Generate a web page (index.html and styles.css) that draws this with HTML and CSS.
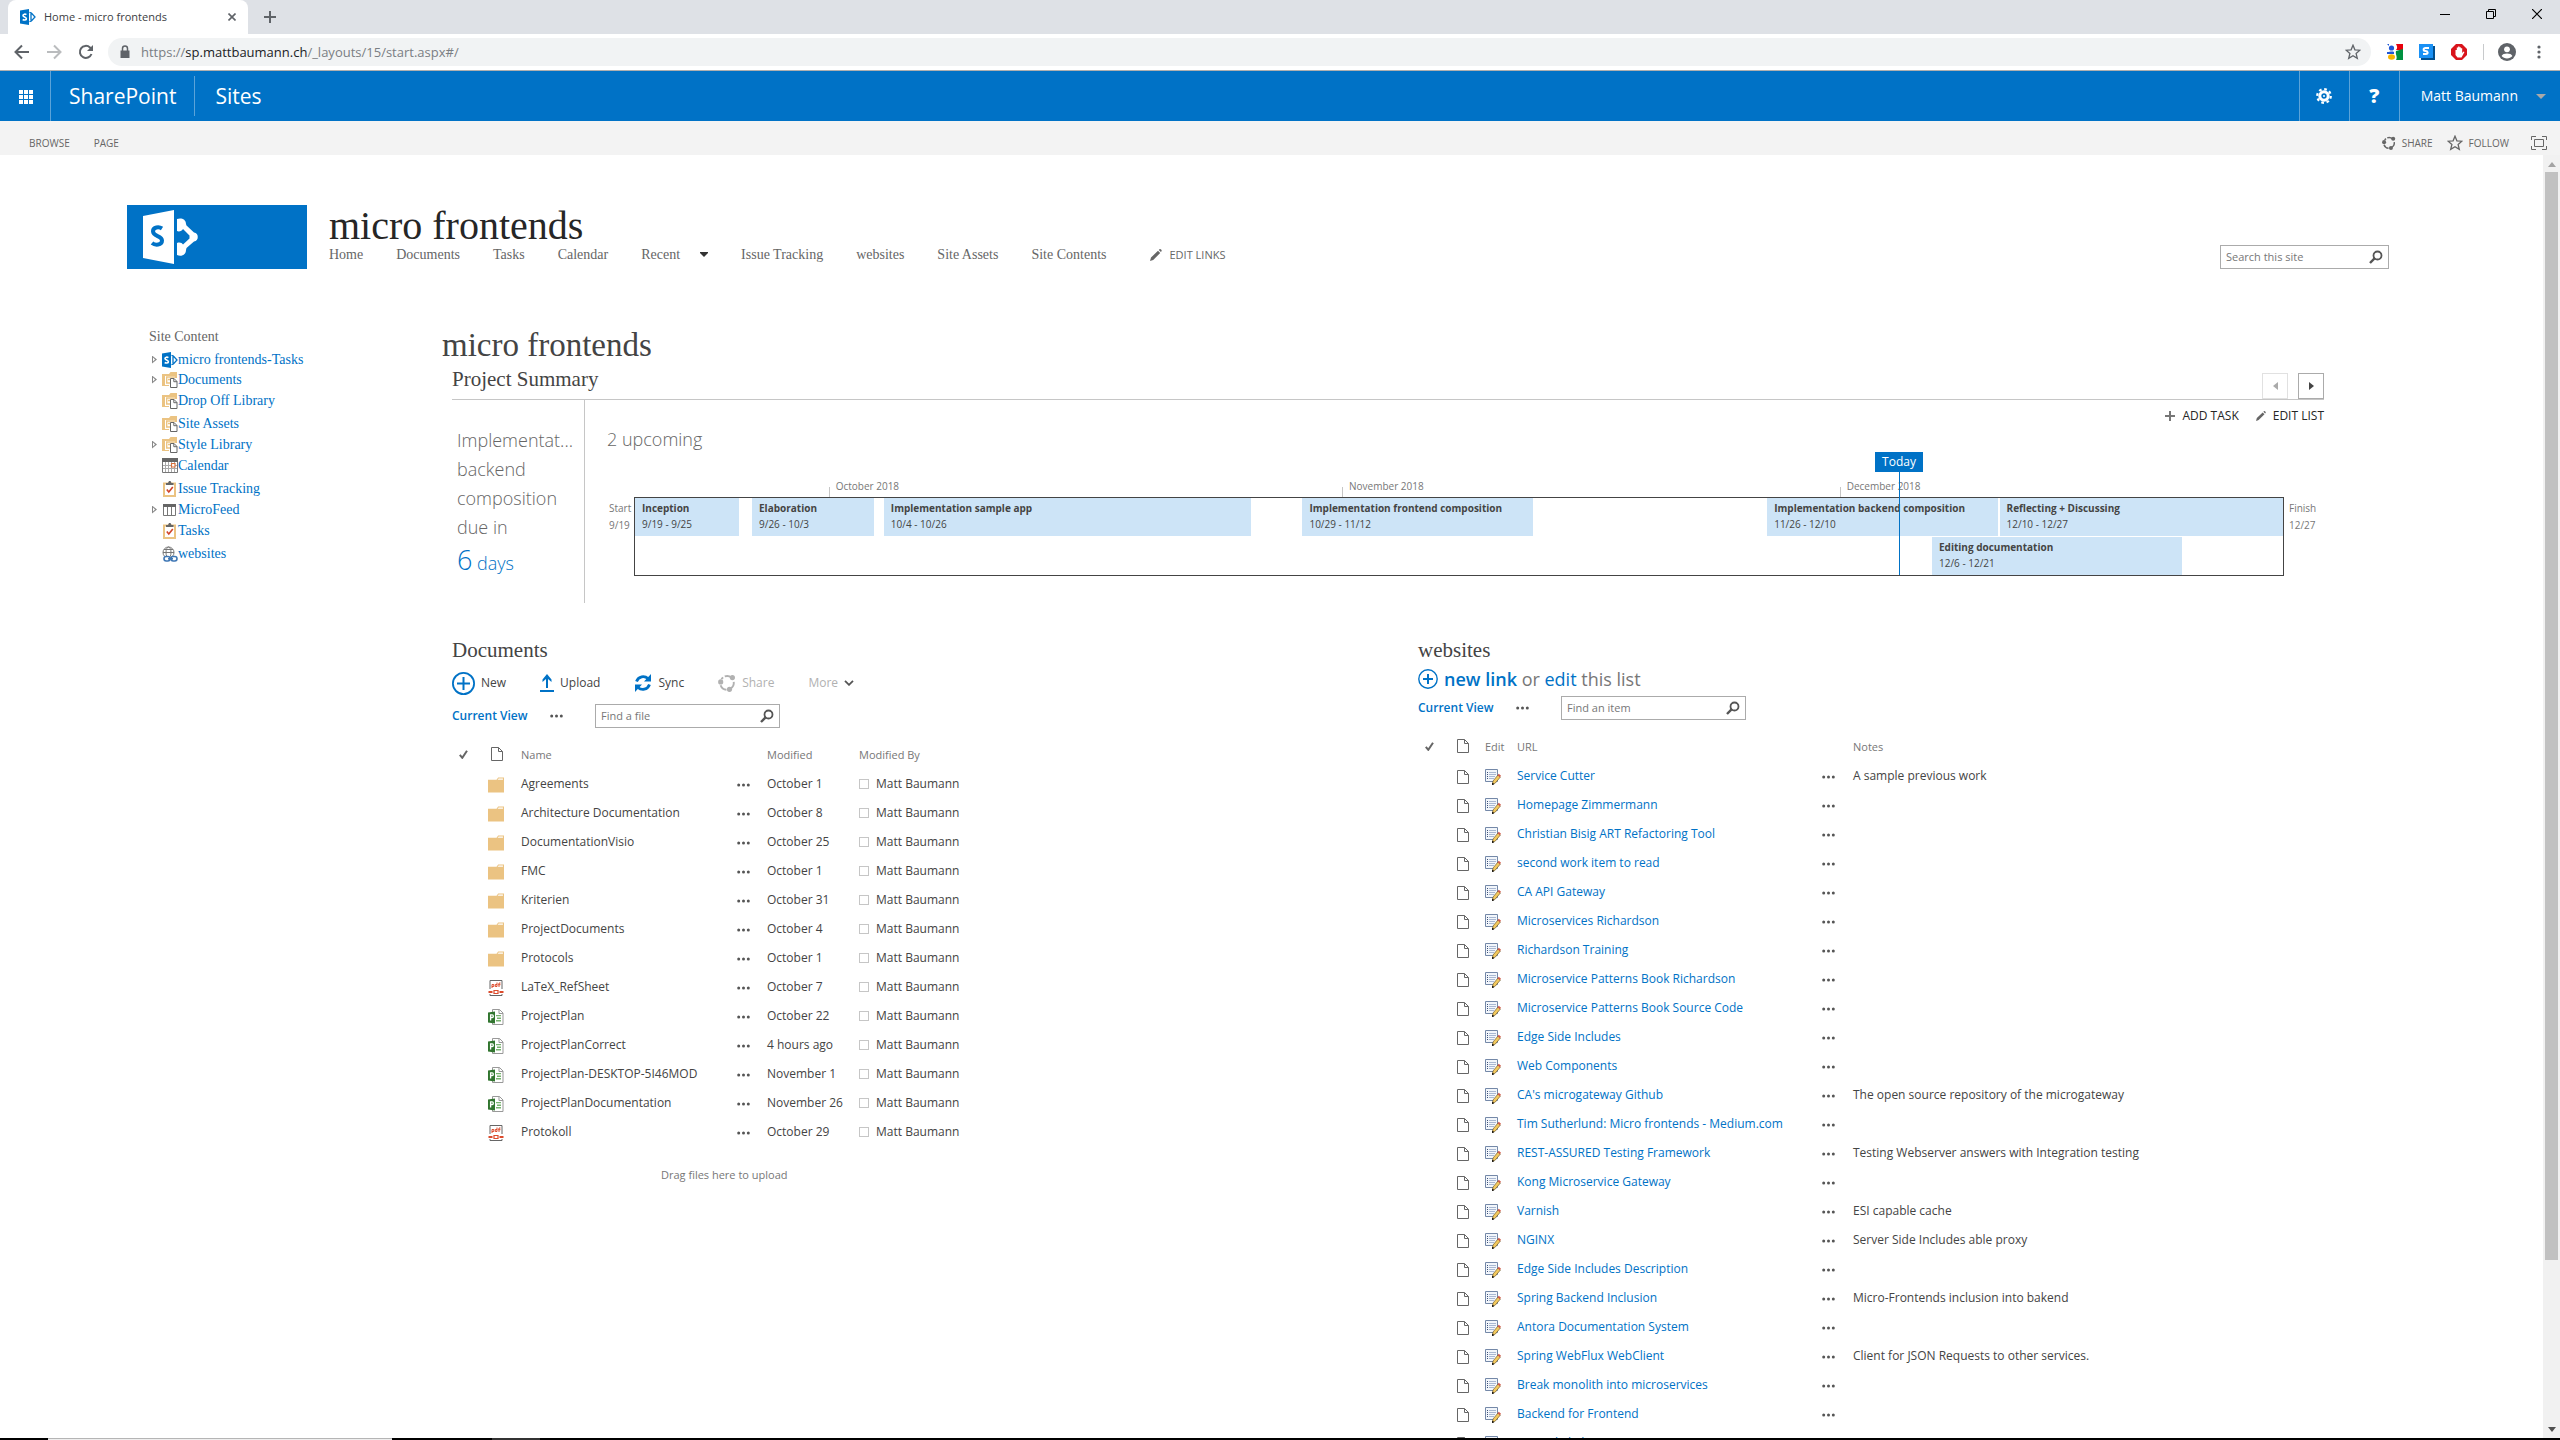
FILE: index.html
```html
<!DOCTYPE html>
<html lang="en">
<head>
<meta charset="utf-8">
<title>Home - micro frontends</title>
<link rel="stylesheet" href="styles.css">
</head>
<body>
<svg class="sprite" aria-hidden="true">
  <symbol id="i-sp" viewBox="0 0 16 16"><path fill="#0072c6" d="M0 1.6 9 0v16L0 14.4z"/><path fill="none" stroke="#0072c6" stroke-width="1.3" d="M9.5 3.4 11.4 4 15 8l-3.6 4-1.9.7M11 4.500v7"/><path fill="none" stroke="#fff" stroke-width="1.6" d="M6.4 5.600C5.400 4.900 3 4.900 3 6.400S6.400 8 6.400 9.700 3.900 11.300 2.700 10.500"/></symbol>
  <symbol id="i-doc" viewBox="0 0 12 14"><path fill="#fff" stroke="#666" d="M.5.5h7l4 4v9H.5z"/><path fill="none" stroke="#666" d="M7.5.5v4h4"/></symbol>
  <symbol id="i-folder" viewBox="0 0 15 14"><path fill="#ebc382" d="M0 2h8l1.500-2H15v14H0z"/><path fill="#fff" d="M9 2l1-1h4v1z"/></symbol>
  <symbol id="i-pdf" viewBox="0 0 15 16"><path fill="none" stroke="#666" d="M1.5 9V.5h12V9M1.5 14v1.500h12V14"/><path fill="#dc4b2c" d="M0 11h4v2H0zM11 11h4v2h-4z"/><path fill="none" stroke="#dc4b2c" stroke-width="1.2" d="M5.5 10.500h4v3h-4z"/><path fill="none" stroke="#dc4b2c" d="M3.5 8V4.500h1.800v2H3.500M8.500 2.500v4H6.800v-2h1.700M10.500 7V3H12M9.700 4.700H12"/></symbol>
  <symbol id="i-proj" viewBox="0 0 16 16"><path fill="#fff" stroke="#999" d="M4.500.5h7l3.500 3.500v11.500H4.500z"/><path fill="none" stroke="#999" d="M11 .5v4h4"/><path fill="#77b36f" d="M8 6h5v1.200H8zM9 8.500h4V10H9zM8 11h5v1.500H8z"/><path fill="#31752f" d="M0 3.500 7 2.500v12L0 13.500z"/><path fill="none" stroke="#fff" stroke-width="1.3" d="M2.600 11.500V5.800h1.600c1.500 0 1.500 2.700 0 2.700H2.600"/></symbol>
  <symbol id="i-edit" viewBox="0 0 16 16"><path fill="#f2f6fb" stroke="#7488a8" d="M.5.5h12v12H.5z"/><path fill="#3d5078" d="M2 3h1v1H2zM2 5h1v1H2zM2 7h1v1H2zM2 9h1v1H2z"/><path fill="none" stroke="#a9b8d2" d="M4 3.500h7M4 5.500h7M4 7.500h6M4 9.500h5"/><path fill="#f3c95e" stroke="#5c4a1c" stroke-width=".6" d="M7.500 15.500 8 12l5-6 2.400 2-5 6z"/><path fill="#cf5a4a" d="m12.500 6.300 1.300-1.600 2.200 2-1.200 1.600z"/><path d="M7 16l.3-2.400 2 1.600z"/></symbol>
  <symbol id="i-lib" viewBox="0 0 16 16"><path fill="#ebc382" d="M0 2h7l1.500-2H15v6h-2V4H3v9h4v1H0z"/><path fill="none" stroke="#ebc382" stroke-width="1.4" d="M4 5h9M4.700 5v6H8M6 7.500h4"/><path fill="#fff" stroke="#666" d="M8.500 6.500H12l3 3v6H8.500z"/><path fill="none" stroke="#666" d="M11.800 6.500v3.200H15"/></symbol>
  <symbol id="i-cal" viewBox="0 0 16 16"><path fill="#fff" stroke="#777" d="M.5.5h15v14H.5z"/><path fill="#666" d="M0 0h16v4H0z"/><path fill="none" stroke="#aaa" d="M3.500 4v10M6.500 4v10M12.500 4v10M1 7.500h14M1 10.500h14M9.500 4v10"/><path fill="#fff" stroke="#d9713c" stroke-width="1.200" d="M9.500 5.500H13V9H9.500z"/></symbol>
  <symbol id="i-task" viewBox="0 0 16 16"><path fill="#fff" stroke="#ebc382" stroke-width="2" d="M2 2.500h11V15H2z"/><path fill="#666" d="M4 4V2h2l1-2h1.500l1 2h2v2z"/><path fill="none" stroke="#d0452b" stroke-width="1.6" d="m4.800 8.500 2 2.500 4-5"/></symbol>
  <symbol id="i-list" viewBox="0 0 16 16"><path fill="#fff" stroke="#777" d="M1.500 3.500h12v10h-12zM5.500 4v9M9.500 4v9"/><path fill="#666" d="M1 2h13v3H1z"/></symbol>
  <symbol id="i-web" viewBox="0 0 16 16"><g fill="none" stroke="#777"><circle cx="6.500" cy="6.500" r="5.500"/><ellipse cx="6.500" cy="6.500" rx="2.500" ry="5.500"/><path d="M1 6.500h11M2 3.500h9"/></g><g fill="#fff" stroke="#3f77b5" stroke-width="1.6"><rect x="2" y="10.500" width="6" height="4.500" rx="2.200"/><rect x="9" y="10.500" width="6" height="4.500" rx="2.200"/><path d="M6 12.800h5"/></g></symbol>
  <symbol id="i-search" viewBox="0 0 14 14"><circle cx="8.500" cy="5.500" r="4" fill="none" stroke="#555" stroke-width="1.8"/><path stroke="#555" stroke-width="2.400" d="M5.800 8.200 1 13"/></symbol>
  <symbol id="i-check" viewBox="0 0 9 9"><path fill="none" stroke="#666" stroke-width="2" d="m.8 4.800 2.500 3L8 .8"/></symbol>
  <symbol id="i-dots" viewBox="0 0 13 4"><g fill="#555"><circle cx="1.700" cy="2" r="1.500"/><circle cx="6.500" cy="2" r="1.500"/><circle cx="11.300" cy="2" r="1.500"/></g></symbol>
  <symbol id="i-pencil" viewBox="0 0 12 12"><path fill="#666" d="M0 12l1-3.500L8 1.800l2.200 2.200-7 6.900zM8.800 1l1-.9c.8-.3 2.200 1.100 1.900 1.900l-.8 1z"/></symbol>
  <symbol id="i-share" viewBox="0 0 16 16"><g fill="none" stroke="currentColor" stroke-width="1.7"><path d="M6 2.200A6 6 0 0 1 12 3.300M14 7a6 6 0 0 1-3 6M7.500 14A6 6 0 0 1 2.300 10M3 4.500l1.500-1.500"/></g><g fill="currentColor"><circle cx="2.400" cy="7" r="2.300"/><circle cx="12.800" cy="3.200" r="2.300"/><circle cx="10.200" cy="13.600" r="2.300"/></g></symbol>
  <symbol id="i-star" viewBox="0 0 16 16"><path fill="none" stroke="currentColor" stroke-width="1.3" d="m8 1.200 1.900 4.600 5 .4-3.800 3.200 1.200 4.900L8 11.700l-4.300 2.600 1.200-4.900L1.100 6.200l5-.4z"/></symbol>
</svg>

<header class="browser">
  <div class="tabstrip">
    <div class="tab">
      <svg class="ic16"><use href="#i-sp"/></svg>
      <span class="tab-title">Home - micro frontends</span>
      <button class="bare" aria-label="Close tab"><svg class="ic8" viewBox="0 0 8 8"><path stroke="#5f6368" stroke-width="1.6" d="m.5.5 7 7M7.500.5l-7 7"/></svg></button>
    </div>
    <button class="bare newtab" aria-label="New tab"><svg class="ic12" viewBox="0 0 12 12"><path stroke="#5f6368" stroke-width="2" d="M6 0v12M0 6h12"/></svg></button>
    <div class="window-buttons">
      <button class="bare" aria-label="Minimize"><svg class="ic10" viewBox="0 0 10 10"><path stroke="#000" d="M0 5.500h10"/></svg></button>
      <button class="bare" aria-label="Restore"><svg class="ic10" viewBox="0 0 10 10"><path fill="none" stroke="#000" d="M.5 2.500h7v7h-7zM2.500 2.500v-2h7v7h-2"/></svg></button>
      <button class="bare" aria-label="Close"><svg class="ic10" viewBox="0 0 10 10"><path stroke="#000" stroke-width="1.2" d="m0 0 10 10M10 0 0 10"/></svg></button>
    </div>
  </div>
  <div class="navbar">
    <button class="bare" aria-label="Back"><svg class="ic16" viewBox="0 0 16 16"><path fill="none" stroke="#5f6368" stroke-width="2" d="M15 8H2M8 1.500 1.500 8 8 14.500"/></svg></button>
    <button class="bare" aria-label="Forward"><svg class="ic16" viewBox="0 0 16 16"><path fill="none" stroke="#babcbe" stroke-width="2" d="M1 8h13M8 1.500 14.500 8 8 14.500"/></svg></button>
    <button class="bare" aria-label="Reload"><svg class="ic16" viewBox="0 0 16 16"><path fill="none" stroke="#5f6368" stroke-width="2" d="M13.500 10A6 6 0 1 1 12 3.500l1 1"/><path fill="#5f6368" d="M15 1v6H9z"/></svg></button>
    <div class="omnibox">
      <svg class="ic14" viewBox="0 0 14 14"><path fill="#5f6368" d="M2.500 5.500h9V13h-9z"/><path fill="none" stroke="#5f6368" stroke-width="1.500" d="M4.500 6V3.500a2.500 2.500 0 0 1 5 0V6"/></svg>
      <span class="url">https://<b>sp.mattbaumann.ch</b>/_layouts/15/start.aspx#/</span>
      <button class="bare fav" aria-label="Bookmark"><svg class="ic16"><use href="#i-star"/></svg></button>
    </div>
    <div class="extensions">
      <svg class="ic16" viewBox="0 0 16 16"><path fill="#fff" d="M0 0h16v16H0z"/><path fill="#e8000d" d="M9 0h7v6H9c2-2 1-4 0-6z"/><path fill="#009140" d="M9 7l7-2v11H9c2-3-1-6 0-9z"/><circle cx="4.500" cy="4" r="2.600" fill="#1f58d6"/><path fill="#1f58d6" d="M0 8c3 0 5-1 7 0v2H0zM0 0h2v2z"/><ellipse cx="4.500" cy="13" rx="3.500" ry="2.700" fill="#f7b500"/></svg>
      <svg class="ic16" viewBox="0 0 16 16"><path fill="#004f8f" d="M2 2h14v14H2z"/><path fill="#1a91f5" d="M0 0h14v14H0z"/><path fill="none" stroke="#fff" stroke-width="2" d="M10 4H6.500C4 4 4 7 6.500 7S9.500 10 7 10H4"/></svg>
      <svg class="ic16" viewBox="0 0 16 16"><path fill="#d9141c" d="M5 0h6l5 5v6l-5 5H5l-5-5V5z"/><path fill="#fff" d="M4.500 6h1.300V3.500h1.300V2.500h1.400v.8h1.300v1h1.400V9l1.300-1.500 1 .5-3 5.500H6.500L4.500 11z"/></svg>
      <span class="ext-sep"></span>
      <svg class="ic18" viewBox="0 0 18 18"><circle cx="9" cy="9" r="9" fill="#5f6368"/><circle cx="9" cy="6.300" r="2.900" fill="#fff"/><path fill="#fff" d="M3.600 13c1-3.300 9.800-3.300 10.800 0-2.500 3.300-8.300 3.300-10.800 0z"/></svg>
      <button class="bare" aria-label="Menu"><svg class="ic14" viewBox="0 0 14 14"><g fill="#5f6368"><circle cx="7" cy="2" r="1.600"/><circle cx="7" cy="7" r="1.600"/><circle cx="7" cy="12" r="1.600"/></g></svg></button>
    </div>
  </div>
</header>

<nav class="suite" aria-label="Suite">
  <button class="bare launcher" aria-label="Apps"><svg class="ic16" viewBox="0 0 16 16"><path fill="#fff" d="M2 2h4v4H2zM7 2h4v4H7zM12 2h4v4h-4zM2 7h4v4H2zM7 7h4v4H7zM12 7h4v4h-4zM2 12h4v4H2zM7 12h4v4H7zM12 12h4v4h-4z"/></svg></button>
  <a class="suite-brand" href="#">SharePoint</a>
  <a class="suite-link" href="#">Sites</a>
  <button class="bare suite-btn push" aria-label="Settings"><svg class="ic16" viewBox="0 0 16 16"><circle cx="8" cy="8" r="4.200" fill="none" stroke="#fff" stroke-width="3"/><circle cx="8" cy="8" r="6.800" fill="none" stroke="#fff" stroke-width="2.200" stroke-dasharray="2.670 2.670"/><circle cx="8" cy="8" r="1" fill="#fff"/></svg></button>
  <button class="bare suite-btn help" aria-label="Help">?</button>
  <button class="bare user">Matt Baumann <svg class="caret" viewBox="0 0 10 5"><path fill="#a9a9a9" d="M0 0h10L5 5z"/></svg></button>
</nav>

<div class="ribbon">
  <a href="#">BROWSE</a>
  <a href="#">PAGE</a>
  <a class="push act" href="#"><svg class="ic14"><use href="#i-share"/></svg>SHARE</a>
  <a class="act" href="#"><svg class="ic16"><use href="#i-star"/></svg>FOLLOW</a>
  <button class="bare focus" aria-label="Focus on content"><svg class="ic16" viewBox="0 0 16 14"><path fill="none" stroke="#666" d="M.5 4V.5H5M11 .5h4.500V4M15.500 10v3.500H11M5 13.500H.5V10M3.500 3.500h9v7h-9z"/></svg></button>
</div>

<div class="workspace">
  <div class="page">
    <header class="site-head">
      <a class="logo" href="#" aria-label="SharePoint"><svg viewBox="0 0 180 64"><path fill="#fff" d="M16 11 47 5v54L16 53z"/><path fill="none" stroke="#0072c6" stroke-width="4" d="M35 23.500c-3-2-9-1.500-9 2.800 0 5.500 9 4 9 9.200 0 5-7 5-10 2.500"/><path fill="#fff" d="M50 14c4-1.500 9 0 9 5l.5 1.500L67 27.500c5 0 5 9 0 9L59.500 43l-.5 2c0 5-5 7-9 5V38c3-1 5 0 6 1.500l6.500-6v-3L56 24c-1 2-4 3-6 2z"/></svg></a>
      <div class="site-title">
        <h1>micro frontends</h1>
        <nav class="topnav" aria-label="Site">
          <a href="#">Home</a><a href="#">Documents</a><a href="#">Tasks</a><a href="#">Calendar</a><a href="#" class="recent">Recent <svg class="ic-down" viewBox="0 0 8 5"><path fill="#333" d="M0 0h8v1L4 5 0 1z"/></svg></a><a href="#">Issue Tracking</a><a href="#">websites</a><a href="#">Site Assets</a><a href="#">Site Contents</a><a class="edit-links" href="#"><svg class="ic12"><use href="#i-pencil"/></svg>EDIT LINKS</a>
        </nav>
      </div>
      <label class="search site-search"><input type="text" placeholder="Search this site" aria-label="Search this site"><svg class="ic14"><use href="#i-search"/></svg></label>
    </header>

    <div class="columns">
      <aside class="tree">
        <p>Site Content</p>
        <ul>
          <li class="root"><i class="exp"></i><svg class="ic16"><use href="#i-sp"/></svg><a href="#">micro frontends-Tasks</a></li>
          <li><i class="exp"></i><svg class="ic16"><use href="#i-lib"/></svg><a href="#">Documents</a></li>
          <li><i></i><svg class="ic16"><use href="#i-lib"/></svg><a href="#">Drop Off Library</a></li>
          <li class="spaced"><i></i><svg class="ic16"><use href="#i-lib"/></svg><a href="#">Site Assets</a></li>
          <li><i class="exp"></i><svg class="ic16"><use href="#i-lib"/></svg><a href="#">Style Library</a></li>
          <li><i></i><svg class="ic16"><use href="#i-cal"/></svg><a href="#">Calendar</a></li>
          <li class="spaced"><i></i><svg class="ic16"><use href="#i-task"/></svg><a href="#">Issue Tracking</a></li>
          <li><i class="exp"></i><svg class="ic16"><use href="#i-list"/></svg><a href="#">MicroFeed</a></li>
          <li><i></i><svg class="ic16"><use href="#i-task"/></svg><a href="#">Tasks</a></li>
          <li class="spaced"><i></i><svg class="ic16"><use href="#i-web"/></svg><a href="#">websites</a></li>
        </ul>
      </aside>

      <main>
        <h2>micro frontends</h2>
        <section class="summary">
          <div class="summary-head">
            <h3>Project Summary</h3>
            <button class="pager off" aria-label="Previous"><svg class="ic-tri" viewBox="0 0 5 8"><path fill="#aaa" d="M5 0v8L0 4z"/></svg></button>
            <button class="pager" aria-label="Next"><svg class="ic-tri" viewBox="0 0 5 8"><path fill="#444" d="M0 0v8l5-4z"/></svg></button>
          </div>
          <div class="summary-body">
            <div class="due">Implementat...<br>backend<br>composition<br>due in<div class="days"><span>6</span> days</div></div>
            <div class="plan">
              <div class="plan-tools">
                <a href="#"><svg class="ic10" viewBox="0 0 10 10"><path stroke="#777" stroke-width="2" d="M5 0v10M0 5h10"/></svg>ADD TASK</a>
                <a href="#"><svg class="ic10" viewBox="0 0 12 12"><use href="#i-pencil"/></svg>EDIT LIST</a>
              </div>
              <div class="upcoming">2 upcoming</div>
              <div class="timeline">
                <div class="edge">Start<br>9/19</div>
                <div class="track">
                  <span class="month" style="left:11.75%">October 2018</span>
                  <span class="month" style="left:42.9%">November 2018</span>
                  <span class="month" style="left:73.1%">December 2018</span>
                  <div class="bar" style="left:0%;width:6.3%"><b>Inception</b>9/19 - 9/25</div>
                  <div class="bar" style="left:7.1%;width:7.4%"><b>Elaboration</b>9/26 - 10/3</div>
                  <div class="bar" style="left:15.1%;width:22.3%"><b>Implementation sample app</b>10/4 - 10/26</div>
                  <div class="bar" style="left:40.5%;width:14%"><b>Implementation frontend composition</b>10/29 - 11/12</div>
                  <div class="bar" style="left:68.7%;width:14%"><b>Implementation backend composition</b>11/26 - 12/10</div>
                  <div class="bar" style="left:82.8%;width:17.2%"><b>Reflecting + Discussing</b>12/10 - 12/27</div>
                  <div class="bar second" style="left:78.7%;width:15.2%"><b>Editing documentation</b>12/6 - 12/21</div>
                  <div class="today" style="left:76.7%"><span>Today</span></div>
                </div>
                <div class="edge">Finish<br>12/27</div>
              </div>
            </div>
          </div>
        </section>

        <div class="lists">
          <section class="docs">
            <h3>Documents</h3>
            <div class="doc-tools">
              <button class="bare"><svg class="ic23" viewBox="0 0 23 23"><circle cx="11.500" cy="11.500" r="10.600" fill="none" stroke="#0072c6" stroke-width="1.8"/><path stroke="#0072c6" stroke-width="2" d="M11.500 5v13M5 11.500h13"/></svg>New</button>
              <button class="bare"><svg class="ic-up" viewBox="0 0 14 18"><path fill="#0072c6" d="M0 16h14v2H0zM6 14V5L2.500 8V5.500L7 0l4.500 5.500V8L8 5v9z"/></svg>Upload</button>
              <button class="bare"><svg class="ic18" viewBox="0 0 17 18"><path fill="none" stroke="#0072c6" stroke-width="2.800" d="M2 7.500C4 2 10 1.500 13.500 4.500M15 10.500C13 16 7 16.500 3.500 13.500"/><path fill="#0072c6" d="M16.500 0v7.500H9.500zM.5 18v-7.500h7z"/></svg>Sync</button>
              <button class="bare muted" disabled><svg class="ic18"><use href="#i-share"/></svg>Share</button>
              <button class="bare muted">More <svg class="ic-chev" viewBox="0 0 10 6"><path fill="none" stroke="#555" stroke-width="1.8" d="m1 .8 4 4 4-4"/></svg></button>
            </div>
            <div class="view-row">
              <a href="#">Current View</a>
              <button class="bare" aria-label="More views"><svg class="ic-dots"><use href="#i-dots"/></svg></button>
              <label class="search"><input type="text" placeholder="Find a file" aria-label="Find a file"><svg class="ic14"><use href="#i-search"/></svg></label>
            </div>
            <table>
              <colgroup><col class="d1"><col class="d2"><col class="d3"><col class="d4"><col class="d5"><col class="d6"></colgroup>
              <thead><tr><th class="ck"><svg class="ic9"><use href="#i-check"/></svg></th><th class="kind"><svg class="ic-doc"><use href="#i-doc"/></svg></th><th>Name</th><th></th><th>Modified</th><th>Modified By</th></tr></thead>
              <tbody id="docs"></tbody>
            </table>
            <p class="drop">Drag files here to upload</p>
          </section>

          <section class="sites">
            <h3>websites</h3>
            <div class="newlink"><svg class="ic20" viewBox="0 0 20 20"><circle cx="10" cy="10" r="9.200" fill="none" stroke="#0072c6" stroke-width="1.400"/><path stroke="#0072c6" stroke-width="2" d="M10 5v10M5 10h10"/></svg><span><a class="strong" href="#">new link</a> or <a href="#">edit</a> this list</span></div>
            <div class="view-row">
              <a href="#">Current View</a>
              <button class="bare" aria-label="More views"><svg class="ic-dots"><use href="#i-dots"/></svg></button>
              <label class="search"><input type="text" placeholder="Find an item" aria-label="Find an item"><svg class="ic14"><use href="#i-search"/></svg></label>
            </div>
            <table>
              <colgroup><col class="w1"><col class="w2"><col class="w3"><col class="w4"><col class="w5"><col></colgroup>
              <thead><tr><th class="ck"><svg class="ic9"><use href="#i-check"/></svg></th><th><svg class="ic-doc"><use href="#i-doc"/></svg></th><th>Edit</th><th>URL</th><th></th><th>Notes</th></tr></thead>
              <tbody id="sites"></tbody>
            </table>
          </section>
        </div>
      </main>
    </div>
  </div>
  <div class="scrollbar" aria-hidden="true">
    <svg class="ic-sb" viewBox="0 0 8 5"><path fill="#a3a3a3" d="M0 5h8L4 0z"/></svg>
    <div class="rail"><div class="thumb"></div></div>
    <svg class="ic-sb" viewBox="0 0 8 5"><path fill="#505050" d="M0 0h8L4 5z"/></svg>
  </div>
</div>
<div class="taskbar" aria-hidden="true"><span class="active"></span><span class="idle"></span></div>
<script src="app.js"></script>
</body>
</html>
```
FILE: styles.css
```css
* { box-sizing: border-box; }
html, body { height: 100%; margin: 0; }
body {
  display: flex;
  flex-direction: column;
  overflow: hidden;
  background: #fff;
  color: #444;
  font: 12px/18px "Open Sans", "Noto Sans", sans-serif;
}
h1, h2, h3, p, ul { margin: 0; padding: 0; font-weight: 400; }
a { color: #0072c6; text-decoration: none; }
svg { display: block; flex: none; }
.sprite { position: absolute; width: 0; height: 0; }
.bare { display: flex; align-items: center; padding: 0; border: 0; background: none; color: inherit; font: inherit; }
.push { margin-left: auto; }

.ic8 { width: 8px; height: 8px; }
.ic9 { width: 9px; height: 9px; }
.ic10 { width: 10px; height: 10px; }
.ic12 { width: 12px; height: 12px; }
.ic14 { width: 14px; height: 14px; }
.ic16 { width: 16px; height: 16px; }
.ic18 { width: 18px; height: 18px; }
.ic20 { width: 20px; height: 20px; }
.ic23 { width: 23px; height: 23px; }
.ic-up { width: 14px; height: 18px; }
.ic-doc { width: 12px; height: 14px; }
.ic-dots { width: 13px; height: 4px; }
.ic-chev { width: 10px; height: 6px; }
.ic-tri { width: 5px; height: 8px; }
.ic-down { width: 8px; height: 5px; }
.ic-sb { width: 8px; height: 5px; }

/* browser window */
.browser { flex: none; border-bottom: 1px solid #b0b0b0; }
.tabstrip { display: flex; align-items: center; height: 34px; padding-left: 8px; background: #dee1e6; }
.tab { display: flex; align-items: center; gap: 8px; width: 240px; height: 34px; padding: 0 12px; border-radius: 8px 8px 0 0; background: #fff; color: #3c4043; font-size: 11px; }
.tab-title { flex: 1; }
.newtab { margin-left: 16px; }
.window-buttons { display: flex; gap: 36px; margin-left: auto; padding: 0 18px 6px 0; }
.navbar { display: flex; align-items: center; gap: 16px; height: 36px; padding: 0 14px; }
.omnibox { display: flex; align-items: center; flex: 1; gap: 9px; height: 28px; margin-left: -2px; padding: 0 10px; border-radius: 14px; background: #f1f3f4; }
.url { flex: 1; color: #7a7e83; font-size: 13px; }
.url b { color: #202124; font-weight: 400; }
.fav { color: #5f6368; }
.extensions { display: flex; align-items: center; gap: 16px; }
.ext-sep { width: 1px; height: 16px; margin-right: -2px; background: #c8cacc; }

/* suite bar */
.suite { display: flex; align-items: center; flex: none; height: 50px; background: #0072c6; color: #fff; }
.suite a { color: #fff; font-size: 21px; line-height: 40px; }
.launcher { justify-content: center; width: 51px; height: 50px; border-right: 1px solid #5ba3d9; }
.suite-brand { padding: 0 18px; border-right: 1px solid #5ba3d9; }
.suite-link { padding: 0 20px; }
.suite-btn { justify-content: center; width: 50px; height: 50px; border-left: 1px solid #5ba3d9; }
.help { font-size: 20px; font-weight: 800; }
.user { gap: 18px; height: 50px; padding: 0 14px 0 21px; border-left: 1px solid #5ba3d9; font-size: 14px; }
.caret { width: 10px; height: 5px; }

.ribbon { display: flex; align-items: center; flex: none; gap: 24px; height: 34px; padding: 9px 13px 0 29px; background: #f3f3f3; }
.ribbon a { color: #666; font-size: 10px; }
.act { display: flex; align-items: center; gap: 6px; margin-right: -10px; }
.act.push { margin-left: auto; }
.focus { margin-left: 8px; }

/* page */
.workspace { display: flex; flex: 1; min-height: 0; }
.page { flex: 1; min-width: 0; overflow: hidden; padding: 50px 154px 0 127px; }
.scrollbar { display: flex; flex-direction: column; align-items: center; flex: none; width: 17px; padding: 7px 0 6px; background: #f1f1f1; }
.rail { flex: 1; width: 13px; margin: 5px 0; }
.thumb { height: 87%; background: #c1c1c1; }
.site-head { display: flex; align-items: flex-start; gap: 22px; }
.logo { width: 180px; height: 64px; background: #0072c6; }
.site-title { flex: 1; font-family: "Liberation Serif", serif; }
h1 { padding-top: 1px; color: #262626; font-size: 40px; line-height: 40px; }
.topnav { display: flex; gap: 33px; font-size: 14px; line-height: 17px; }
.topnav a { color: #666; }
.recent { display: flex; align-items: center; gap: 20px; }
.topnav .edit-links { display: flex; align-items: center; gap: 8px; margin-left: 10px; font-family: "Open Sans", sans-serif; font-size: 11px; }
.search { display: flex; align-items: center; width: 185px; height: 24px; padding: 0 5px; border: 1px solid #ababab; background: #fff; }
.search input { flex: 1; min-width: 0; padding: 0; border: 0; outline: 0; background: none; color: #444; font: 11px/18px "Open Sans", sans-serif; }
.search input::placeholder { color: #777; opacity: 1; }
.site-search { width: 169px; align-self: flex-end; }

.columns { display: flex; padding-top: 56px; }
.tree { flex: none; width: 315px; padding: 2px 0 0 22px; font: 14px/20px "Liberation Serif", serif; }
.tree p { color: #666; }
.tree ul { padding-top: 3px; list-style: none; }
.tree li { display: flex; align-items: center; height: 21px; }
.tree .root { height: 19px; }
.tree .spaced { margin-top: 2px; }
.tree i { width: 13px; }
.tree .exp::before { content: ""; display: block; width: 5px; height: 8px; margin-left: 3px; background: #888; clip-path: polygon(0 0, 100% 50%, 0 100%, 0 0, 1px 2px, 1px 6px, 3px 4px, 1px 2px); }
main { flex: 1; min-width: 0; padding-right: 65px; }
h2 { color: #444; font: 33px/40px "Liberation Serif", serif; }
h3 { color: #444; font: 21px/28px "Liberation Serif", serif; }

.summary, .lists { margin-left: 10px; }
.summary-head { display: flex; gap: 10px; height: 35px; border-bottom: 1px solid #c6c6c6; }
.summary-head h3 { flex: 1; }
.pager { display: flex; align-items: center; justify-content: center; align-self: flex-end; width: 26px; height: 26px; padding: 0; border: 1px solid #ababab; background: #fff; }
.pager.off { border-color: #e1e1e1; }
.summary-body { display: flex; height: 203px; }
.due { width: 133px; padding: 26px 0 0 5px; border-right: 1px solid #c6c6c6; color: #666; font-size: 18px; font-weight: 300; line-height: 29px; white-space: nowrap; }
.days { color: #0072c6; line-height: 35px; }
.days span { font-size: 27px; }
.plan { flex: 1; padding-left: 22px; }
.plan-tools { display: flex; justify-content: flex-end; gap: 17px; padding-top: 7px; }
.plan-tools a { display: flex; align-items: center; gap: 7px; color: #262626; }
.upcoming { color: #666; font-size: 18px; font-weight: 300; line-height: 29px; }
.timeline { display: flex; padding-top: 43px; font-size: 10px; line-height: 17px; white-space: nowrap; }
.edge { width: 27px; padding: 3px 0 0 2px; color: #777; }
.edge:last-child { width: 40px; padding-left: 5px; }
.track { position: relative; flex: 1; height: 79px; border: 1px solid #444; }
.bar { position: absolute; top: 0; height: 38px; padding: 2px 0 0 7px; background: #cde4f7; color: #444; line-height: 16px; }
.bar.second { top: 39px; }
.bar b { display: block; }
.month { position: absolute; top: -20px; height: 19px; padding-left: 7px; color: #777; }
.month::before { content: ""; position: absolute; left: 0; bottom: 0; height: 10px; border-left: 1px solid #c6c6c6; }
.today { position: absolute; top: -46px; bottom: 0; width: 1px; background: #0072c6; }
.today span { position: absolute; left: -24px; width: 48px; height: 20px; background: #0072c6; color: #fff; font-size: 12px; line-height: 20px; text-align: center; }

/* lists */
.lists { display: grid; grid-template-columns: 1fr 1fr; gap: 60px; padding-top: 33px; }
.doc-tools { display: flex; align-items: center; gap: 34px; height: 36px; padding-top: 2px; }
.doc-tools .bare { gap: 6px; }
.doc-tools .muted { color: #b1b1b1; }
.view-row { display: flex; align-items: center; padding-top: 4px; }
.view-row a { width: 98px; font-weight: 600; }
.view-row .search { margin-left: 32px; }
.newlink { display: flex; align-items: center; gap: 6px; height: 28px; padding-top: 2px; color: #777; font-size: 18px; line-height: 26px; }
.newlink .strong { font-weight: 600; }

table { width: 100%; margin-top: 13px; border-collapse: collapse; table-layout: fixed; }
th, td { height: 29px; padding: 0; text-align: left; white-space: nowrap; }
th { height: 28px; color: #777; font-size: 11px; font-weight: 400; }
th svg { margin-bottom: 2px; }
td svg { margin-top: 2px; }
th.ck { padding-left: 7px; }
th.kind { padding-left: 3px; }
.docs table { width: 537px; }
.d1 { width: 36px; }
.d2 { width: 33px; }
.d3 { width: 216px; }
.d4 { width: 30px; }
.d5 { width: 92px; }
.d6 { width: 130px; }
.w1 { width: 39px; }
.w2 { width: 28px; }
.w3 { width: 32px; }
.w4 { width: 305px; }
.w5 { width: 31px; }
td a.file { color: #444; }
.presence { display: inline-block; width: 10px; height: 10px; margin-right: 7px; border: 1px solid #c6c6c6; vertical-align: -1px; }
.drop { width: 537px; padding: 20px 0 0 209px; color: #777; font-size: 11px; }

.taskbar { display: flex; flex: none; height: 2px; padding-left: 48px; background: #000; }
.taskbar .active { width: 344px; border-top: 1px solid #b5b5b5; background: #eee; }
.taskbar .idle { width: 48px; margin-left: 100px; background: #333; }
```
FILE: app.js
```js
const documents = [
  ["folder", "Agreements", "October 1"],
  ["folder", "Architecture Documentation", "October 8"],
  ["folder", "DocumentationVisio", "October 25"],
  ["folder", "FMC", "October 1"],
  ["folder", "Kriterien", "October 31"],
  ["folder", "ProjectDocuments", "October 4"],
  ["folder", "Protocols", "October 1"],
  ["pdf", "LaTeX_RefSheet", "October 7"],
  ["proj", "ProjectPlan", "October 22"],
  ["proj", "ProjectPlanCorrect", "4 hours ago"],
  ["proj", "ProjectPlan-DESKTOP-5I46MOD", "November 1"],
  ["proj", "ProjectPlanDocumentation", "November 26"],
  ["pdf", "Protokoll", "October 29"]
];

const websites = [
  ["Service Cutter", "A sample previous work"],
  ["Homepage Zimmermann"],
  ["Christian Bisig ART Refactoring Tool"],
  ["second work item to read"],
  ["CA API Gateway"],
  ["Microservices Richardson"],
  ["Richardson Training"],
  ["Microservice Patterns Book Richardson"],
  ["Microservice Patterns Book Source Code"],
  ["Edge Side Includes"],
  ["Web Components"],
  ["CA's microgateway Github", "The open source repository of the microgateway"],
  ["Tim Sutherlund: Micro frontends - Medium.com"],
  ["REST-ASSURED Testing Framework", "Testing Webserver answers with Integration testing"],
  ["Kong Microservice Gateway"],
  ["Varnish", "ESI capable cache"],
  ["NGINX", "Server Side Includes able proxy"],
  ["Edge Side Includes Description"],
  ["Spring Backend Inclusion", "Micro-Frontends inclusion into bakend"],
  ["Antora Documentation System"],
  ["Spring WebFlux WebClient", "Client for JSON Requests to other services."],
  ["Break monolith into microservices"],
  ["Backend for Frontend"],
  ["Example link"]
];

const icon = (name, cls) => `<svg class="${cls}"><use href="#i-${name}"/></svg>`;
const dots = `<button class="bare" aria-label="Item menu">${icon("dots", "ic-dots")}</button>`;

document.getElementById("docs").innerHTML = documents.map(([type, name, date]) =>
  `<tr><td></td><td>${icon(type, "ic16")}</td><td><a class="file" href="#">${name}</a></td>` +
  `<td>${dots}</td><td>${date}</td><td><span class="presence"></span>Matt Baumann</td></tr>`
).join("");

document.getElementById("sites").innerHTML = websites.map(([name, note = ""]) =>
  `<tr><td></td><td>${icon("doc", "ic-doc")}</td><td>${icon("edit", "ic16")}</td>` +
  `<td><a href="#">${name}</a></td><td>${dots}</td><td>${note}</td></tr>`
).join("");
```
